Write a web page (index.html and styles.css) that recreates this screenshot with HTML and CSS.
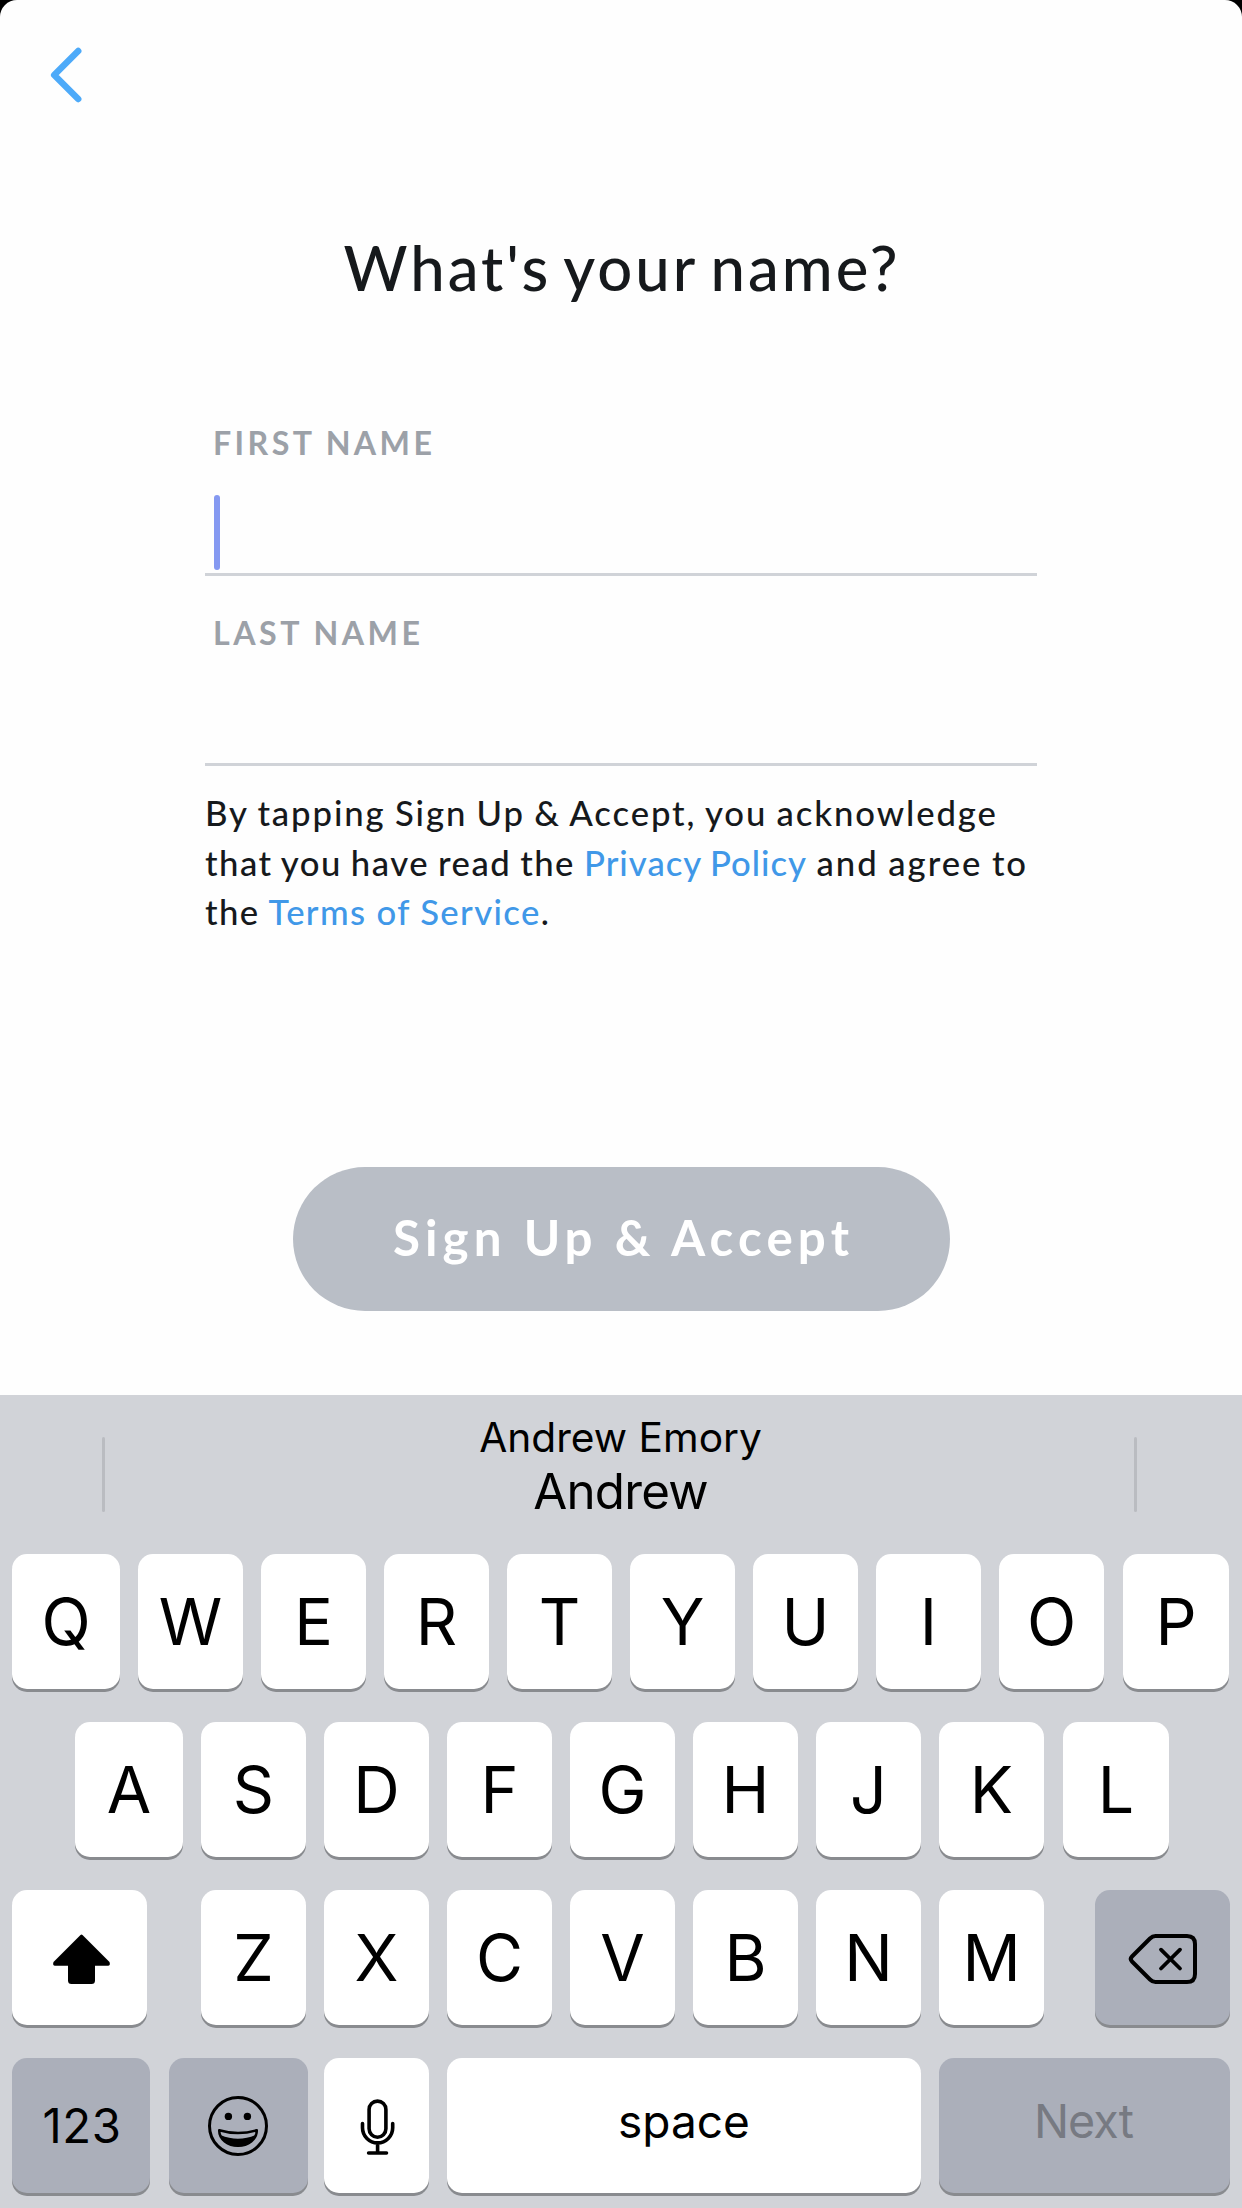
FILE: index.html
```html
<!DOCTYPE html>
<html lang="en">
<head>
<meta charset="utf-8">
<title>Sign Up</title>
<link rel="stylesheet" href="styles.css">
</head>
<body>
<div class="screen">
  <main class="signup">
    <nav class="topbar">
      <svg class="back" width="34" height="58" viewBox="0 0 34 58" role="img" aria-label="Back"><path d="M30.2 5 6.200 29l24 24"/></svg>
    </nav>
    <h1 class="title">What's your name?</h1>
    <form class="form">
      <div class="field">
        <span class="label label-first">FIRST NAME</span>
        <span class="caret"></span>
      </div>
      <div class="field">
        <span class="label label-last">LAST NAME</span>
      </div>
      <p class="terms">
        <span class="line line-1">By tapping Sign Up &amp; Accept, you acknowledge</span>
        <span class="line line-2">that you have read the <a class="link policy">Privacy Policy</a><span class="tail"> and agree to</span></span>
        <span class="line line-3">the <a class="link">Terms of Service</a>.</span>
      </p>
    </form>
    <button class="submit" type="button">Sign Up &amp; Accept</button>
  </main>

  <section class="keyboard">
    <div class="suggestions">
      <div class="divider"></div>
      <div class="suggestion">
        <span class="full">Andrew Emory</span>
        <span class="short">Andrew</span>
      </div>
      <div class="divider"></div>
    </div>
    <div class="row">
      <span class="key edge">Q</span><span class="key">W</span><span class="key">E</span><span class="key">R</span><span class="key">T</span><span class="key">Y</span><span class="key">U</span><span class="key">I</span><span class="key">O</span><span class="key end">P</span>
    </div>
    <div class="row row-home">
      <span class="key edge">A</span><span class="key">S</span><span class="key">D</span><span class="key">F</span><span class="key">G</span><span class="key">H</span><span class="key">J</span><span class="key">K</span><span class="key end">L</span>
    </div>
    <div class="row">
      <span class="key shift"><svg width="135" height="135" viewBox="0 0 135 135"><path d="M68.500 45q1-1.200 2 0L97.500 72q1.200 3.700-1.500 3.700H83V90.500q0 3.500-3.500 3.500h-20q-3.500 0-3.500-3.500V75.700H43q-2.700 0-1.500-3.700Z"/></svg></span>
      <span class="key">Z</span><span class="key">X</span><span class="key">C</span><span class="key">V</span><span class="key">B</span><span class="key">N</span><span class="key">M</span>
      <span class="key dark delete"><svg class="stroke" width="135" height="135" viewBox="0 0 135 135"><path stroke-width="4" d="M60.500 46H92q8 0 8 8v30q0 8-8 8H60.500q-3 0-5.500-2.500L37 71.500q-2.500-2.500 0-5L55 48.500q2.500-2.500 5.500-2.500Z"/><path stroke-width="3.800" d="m66 59.700 19 18.800m0-18.800L66 78.500"/></svg></span>
    </div>
    <div class="row">
      <span class="key dark numbers">123</span>
      <span class="key dark emoji"><svg class="stroke" width="139" height="135" viewBox="0 0 139 135"><circle cx="69" cy="68" r="28.500" stroke-width="3"/><g class="solid"><circle cx="59.400" cy="58.400" r="3.700"/><circle cx="78.400" cy="58.400" r="3.700"/><path d="M51.500 77Q69 84.500 86.500 77 81 88.500 69 88.500T51.500 77Z"/></g><path stroke-width="2.500" d="M50.200 72.200q18.800 5.600 37.600 0C88 81.500 79 87.700 69 87.700S50 81.500 50.200 72.200Z"/></svg></span>
      <span class="key mic"><svg class="stroke" width="105" height="135" viewBox="0 0 105 135"><rect x="45.100" y="43.100" width="16.800" height="36.100" rx="8.400" stroke-width="3.600"/><path stroke-width="3.600" d="M38.500 65.500v4.300a15.100 15.100 0 0 0 30.200 0v-4.300M53.600 85v10M44.600 95h17.900"/></svg></span>
      <span class="key space">space</span>
      <span class="key dark next">Next</span>
    </div>
  </section>
</div>
</body>
</html>
```
FILE: styles.css
```css
* { box-sizing: border-box; }

body {
  margin: 0;
  background: #000;
}

.screen {
  display: flex;
  flex-direction: column;
  width: 1242px;
  height: 2208px;
  overflow: hidden;
  background: #fefefe;
  border-radius: 17px 17px 0 0;
}

/* Sign-up form */
.signup {
  display: flex;
  flex-direction: column;
  align-items: center;
  height: 1395px;
  color: #16191c;
  font-family: Lato, "Open Sans", sans-serif;
  font-weight: 500;
}

.topbar {
  width: 100%;
  height: 230px;
  padding: 46px 48px;
}

.back {
  display: block;
  fill: none;
  stroke: #4daaf9;
  stroke-width: 6.500;
  stroke-linecap: round;
  stroke-linejoin: round;
}

.title {
  margin: 0;
  padding-left: 2px;
  font-size: 61.6px;
  line-height: 74px;
  font-weight: 500;
  letter-spacing: 3px;
  word-spacing: -5px;
  white-space: nowrap;
}

.form {
  width: 832px;
  margin-top: 82px;
}

.field {
  display: flex;
  flex-direction: column;
  height: 190px;
  padding: 37px 0 0 9px;
  border-bottom: 3px solid #d0d3d8;
}

.label {
  margin-left: -1px;
  color: #9ca1a8;
  font-size: 32.2px;
  line-height: 40px;
  font-weight: 700;
}

.label-first { letter-spacing: 3.4px; }
.label-last { letter-spacing: 3.5px; }

.caret {
  width: 6px;
  height: 75px;
  margin-top: 32px;
  border-radius: 3px;
  background: #8599f1;
}

.terms {
  margin: 22px 0 0;
  font-size: 34.7px;
  line-height: 49.5px;
}

.line {
  display: block;
  white-space: nowrap;
}

.line-1 {
  letter-spacing: 1.9px;
  word-spacing: -1.3px;
}

.line-2 {
  letter-spacing: 1.5px;
  word-spacing: -1.3px;
}

.line-3 { letter-spacing: 1.35px; }

.link { color: #4098e8; }
.policy { letter-spacing: 1px; }
.tail { letter-spacing: 2px; }

.submit {
  width: 657px;
  height: 144px;
  margin-top: 230px;
  padding: 0 0 4px 5px;
  border: 0;
  border-radius: 72px;
  background: #b9bec6;
  color: #fff;
  font: 700 49.3px Lato, "Open Sans", sans-serif;
  letter-spacing: 5.1px;
}

/* Keyboard */
.keyboard {
  display: flex;
  flex-direction: column;
  gap: 33px;
  height: 813px;
  padding: 0 12px;
  background: #d1d3d8;
  color: #000;
  font-family: Inter, "Liberation Sans", sans-serif;
}

.suggestions {
  display: flex;
  justify-content: space-between;
  height: 126px;
  padding: 0 93px 0 90px;
}

.divider {
  width: 3px;
  height: 75px;
  margin-top: 42px;
  border-radius: 2px;
  background: #babcc1;
}

.suggestion {
  display: flex;
  flex-direction: column;
  align-items: center;
  padding: 18px 0 0 2px;
  white-space: nowrap;
}

.full {
  font-size: 40.7px;
  line-height: 50px;
}

.short {
  font-size: 49.3px;
  line-height: 57px;
  letter-spacing: -0.8px;
}

.row {
  display: flex;
  gap: 18px;
  height: 135px;
}

.row-home { padding-left: 63px; }

.key {
  display: flex;
  flex: none;
  align-items: center;
  justify-content: center;
  width: 105px;
  height: 135px;
  border-radius: 15px;
  background: #fff;
  box-shadow: 0 3px 0 #898b8f;
  font-size: 64.4px;
}

.edge { width: 108px; }

.end {
  width: 106px;
  margin-left: 1px;
}

.dark { background: #abafba; }

.shift {
  width: 135px;
  margin-right: 36px;
}

.delete {
  width: 135px;
  margin-left: 33px;
}

.numbers {
  width: 138px;
  padding-left: 2px;
  font-size: 47.3px;
  letter-spacing: 0.6px;
}

.emoji {
  width: 139px;
  margin: 0 -2px 0 1px;
}

.space {
  width: 474px;
  padding-bottom: 10px;
  font-size: 46px;
}

.next {
  width: 291px;
  padding: 0 2px 10px 0;
  color: #777a82;
  font-size: 46.6px;
  letter-spacing: -0.9px;
}

.stroke {
  fill: none;
  stroke: #000;
  stroke-linecap: round;
  stroke-linejoin: round;
}

.solid {
  fill: #000;
  stroke: none;
}
```
